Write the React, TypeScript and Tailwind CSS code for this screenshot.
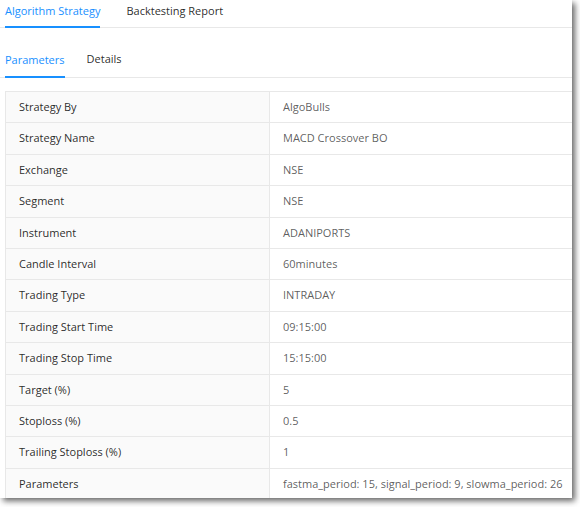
import React from "react";

const rows: [string, string][] = [
  ["Strategy By", "AlgoBulls"],
  ["Strategy Name", "MACD Crossover BO"],
  ["Exchange", "NSE"],
  ["Segment", "NSE"],
  ["Instrument", "ADANIPORTS"],
  ["Candle Interval", "60minutes"],
  ["Trading Type", "INTRADAY"],
  ["Trading Start Time", "09:15:00"],
  ["Trading Stop Time", "15:15:00"],
  ["Target (%)", "5"],
  ["Stoploss (%)", "0.5"],
  ["Trailing Stoploss (%)", "1"],
  ["Parameters", "fastma_period: 15, signal_period: 9, slowma_period: 26"],
];

export default function App() {
  return (
    <div className="w-[580px] h-[507px] bg-white overflow-hidden" style={{ fontFamily: '"Open Sans", "Noto Sans", sans-serif' }}>
      <div className="w-[572px] h-[498px] bg-white overflow-hidden shadow-[3px_3px_6px_rgba(0,0,0,0.6)] text-[11px]">
        {/* main tabs */}
        <div className="flex h-[28px] border-b border-[#e8e8e8] pl-[5px] gap-[26px]">
          <div className="h-[28px] border-b-2 border-[#1890ff] text-[#1890ff] pt-[3px] -mb-px">Algorithm Strategy</div>
          <div className="pt-[3px] text-black/[0.85]">Backtesting Report</div>
        </div>

        {/* sub tabs */}
        <div className="flex h-[50px] items-end border-b border-[#e8e8e8] pl-[5px] gap-[22px]">
          <div className="h-[27px] border-b-2 border-[#1890ff] text-[#1890ff] pt-[1px] -mb-px">Parameters</div>
          <div className="h-[27px] pt-[1px] text-black/[0.85]">Details</div>
        </div>

        {/* table */}
        <div className="ml-[5px] mt-[13px] border-l border-t border-[#e8e8e8]">
          {rows.map(([k, v]) => (
            <div key={k} className="flex h-[31.42px] border-b border-[#e8e8e8]">
              <div className="w-[264px] shrink-0 bg-[#fafafa] border-r border-[#e8e8e8] pl-[13px] flex items-center text-black/[0.85]">
                {k}
              </div>
              <div className="flex-1 pl-[13px] flex items-center text-black/[0.65] whitespace-nowrap">{v}</div>
            </div>
          ))}
        </div>
      </div>
    </div>
  );
}
